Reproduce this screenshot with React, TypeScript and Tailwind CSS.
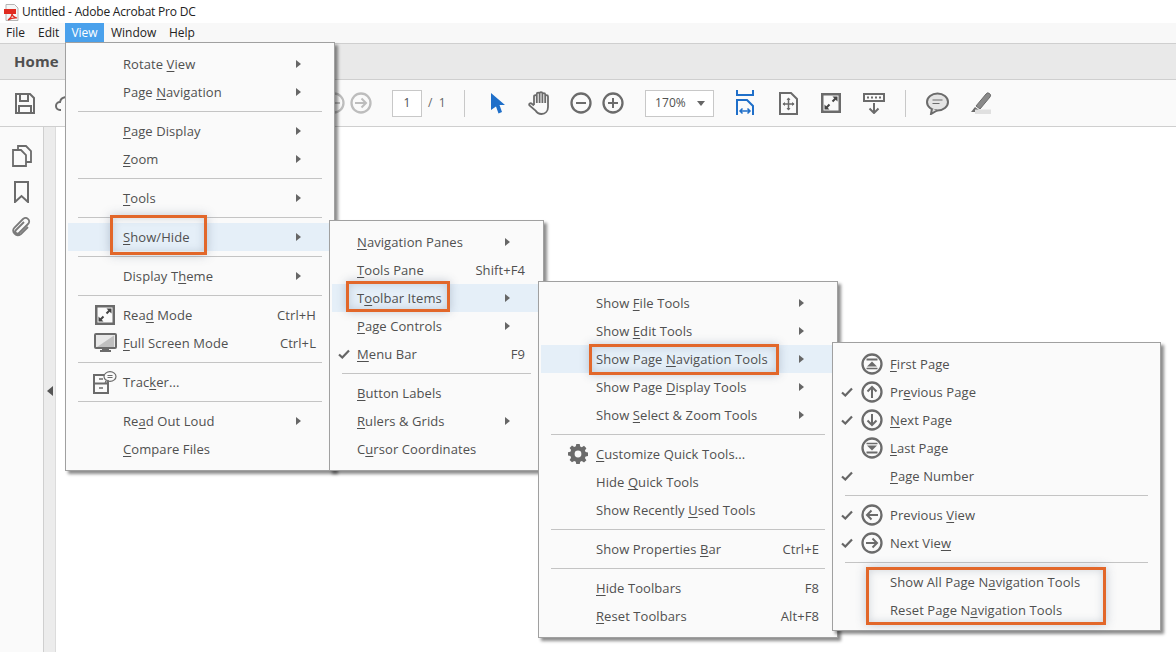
import type { ReactNode } from "react";

type Fila =
  | { sep: true }
  | {
      sep?: false;
      texto: string; // & marca la letra subrayada
      flecha?: boolean;
      atajo?: string;
      check?: boolean;
      icono?: ReactNode;
      activa?: boolean;
    };

const gris = "#6b6b6b";

function Svg({ w, h, children }: { w: number; h: number; children: ReactNode }) {
  return (
    <svg width={w} height={h} viewBox={`0 0 ${w} ${h}`} fill="none" className="block flex-none">
      {children}
    </svg>
  );
}

function Circulo({ children, color = gris, r = 9.5, size = 22 }: { children: ReactNode; color?: string; r?: number; size?: number }) {
  const c = size / 2;
  return (
    <Svg w={size} h={size}>
      <circle cx={c} cy={c} r={r} stroke={color} strokeWidth="2.300" />
      <g stroke={color} strokeWidth="2" fill="none" transform={`translate(${c - 11} ${c - 11})`}>
        {children}
      </g>
    </Svg>
  );
}

const FlechaArriba = () => <Circulo><path d="M11 17V6M6.5 10.5 11 6l4.5 4.5" /></Circulo>;
const FlechaAbajo = () => <Circulo><path d="M11 5v11M6.5 11.5 11 16l4.5-4.5" /></Circulo>;
const FlechaIzq = ({ color }: { color?: string }) => <Circulo color={color}><path d="M17 11H6M10.5 6.5 6 11l4.5 4.5" /></Circulo>;
const FlechaDer = ({ color }: { color?: string }) => <Circulo color={color}><path d="M5 11h11M11.5 6.5 16 11l-4.5 4.5" /></Circulo>;
const Primera = () => (
  <Circulo>
    <path d="M5.500 6.500h11" />
    <path d="M11 8.500 16 13.500H6z" fill={gris} stroke="none" />
    <path d="M5.500 15.500h11" strokeWidth="1.500" />
  </Circulo>
);
const Ultima = () => (
  <Circulo>
    <path d="M5.500 6.500h11" strokeWidth="1.500" />
    <path d="M11 13.500 6 8.500h10z" fill={gris} stroke="none" />
    <path d="M5.500 15.500h11" />
  </Circulo>
);

const Engrane = () => (
  <Svg w={20} h={20}>
    <path
      d="M8.3 0h3.4l.5 2.6 1.6.7 2.2-1.5 2.4 2.4-1.5 2.2.7 1.6 2.4.5v3.4l-2.4.5-.7 1.6 1.5 2.2-2.4 2.4-2.2-1.5-1.6.7-.5 2.6H8.3l-.5-2.6-1.6-.7L4 18.3l-2.4-2.4 1.5-2.2-.7-1.6L0 11.6V8.2l2.4-.5.7-1.6L1.6 3.900 4 1.500l2.200 1.500 1.600-.7z"
      fill={gris}
    />
    <circle cx="10" cy="10" r="3.4" fill="#fafafa" />
  </Svg>
);

const LeerModo = ({ size = 20 }: { size?: number }) => (
  <Svg w={size} h={size}>
    <rect x="1.250" y="1.250" width={size - 2.500} height={size - 2.500} fill="none" stroke={gris} strokeWidth="2.500" />
    <path d="M11.500 8.500 15 5M8.500 11.500 5 15" stroke="#444" strokeWidth="2" />
    <path d="M11.500 3.500h5v5zM8.500 16.500h-5v-5z" fill="#444" />
  </Svg>
);

const Pantalla = () => (
  <Svg w={23} h={20}>
    <rect x="1" y="1" width="21" height="14" rx="1" fill="#e8e8e8" stroke={gris} strokeWidth="2" />
    <path d="M3 14 20 2.500V14z" fill="#c0c0c0" />
    <rect x="8" y="15" width="7" height="3" fill={gris} />
    <rect x="6" y="17" width="11" height="2" fill={gris} />
  </Svg>
);

const Rastreador = () => (
  <Svg w={24} h={24}>
    <path d="M1 5h14v18H1z" fill="#fafafa" stroke={gris} strokeWidth="2" />
    <path d="M1 13.500h14" stroke={gris} strokeWidth="2" />
    <path d="M6 9h4M6 18h4" stroke={gris} strokeWidth="1.500" />
    <ellipse cx="17" cy="6.500" rx="6" ry="4.800" fill="#fafafa" stroke={gris} strokeWidth="1.200" />
    <path d="M14.500 5.500h5M14.500 7.500h5" stroke={gris} />
    <path d="M13.500 10l-1.500 2.500 4-1.500z" fill="#fafafa" stroke={gris} strokeWidth="1" />
  </Svg>
);

const Check = () => (
  <svg width="12" height="10" viewBox="0 0 12 10" className="block">
    <path d="M1 5.500 4.300 8.500 11 1.500" stroke="#666" strokeWidth="2.200" fill="none" />
  </svg>
);

function Etiqueta({ texto }: { texto: string }) {
  const i = texto.indexOf("&");
  if (i < 0) return <span>{texto}</span>;
  return (
    <span>
      {texto.slice(0, i)}
      <span className="underline underline-offset-2">{texto[i + 1]}</span>
      {texto.slice(i + 2)}
    </span>
  );
}

function Menu({ clase, margen, filas }: { clase: string; margen: string; filas: Fila[] }) {
  return (
    <div className={`absolute flex flex-col border border-[#a0a0a0] bg-[#fafafa] py-[7px] shadow-[3px_3px_3px_rgba(0,0,0,0.45)] ${clase}`}>
      {filas.map((f, i) =>
        f.sep ? (
          <div key={i} className="flex h-[11px] flex-none items-center px-[12px]">
            <div className="h-px w-full bg-[#c4c4c4]" />
          </div>
        ) : (
          <div key={i} className={`relative mx-[2px] flex h-[28px] flex-none items-center ${f.activa ? "bg-[#e5eff8]" : ""}`}>
            {f.check && (
              <div className="absolute left-[6px] top-[9px]">
                <Check />
              </div>
            )}
            {f.icono && <div className="absolute left-[26px] top-1/2 flex w-[22px] -translate-y-1/2 justify-center">{f.icono}</div>}
            <div className={`${margen} flex-1 whitespace-nowrap pt-[2px]`}>
              <Etiqueta texto={f.texto} />
            </div>
            {f.atajo && <div className="mr-[16px] whitespace-nowrap pt-[2px]">{f.atajo}</div>}
            {f.flecha && <div className="mr-[31px] h-0 w-0 border-y-[4px] border-l-[5px] border-y-transparent border-l-[#666]" />}
          </div>
        ),
      )}
    </div>
  );
}

const vista: Fila[] = [
  { texto: "Rotate &View", flecha: true },
  { texto: "Page &Navigation", flecha: true },
  { sep: true },
  { texto: "&Page Display", flecha: true },
  { texto: "&Zoom", flecha: true },
  { sep: true },
  { texto: "&Tools", flecha: true },
  { sep: true },
  { texto: "&Show/Hide", flecha: true, activa: true },
  { sep: true },
  { texto: "Display T&heme", flecha: true },
  { sep: true },
  { texto: "Rea&d Mode", atajo: "Ctrl+H", icono: <LeerModo /> },
  { texto: "&Full Screen Mode", atajo: "Ctrl+L", icono: <Pantalla /> },
  { sep: true },
  { texto: "Trac&ker...", icono: <Rastreador /> },
  { sep: true },
  { texto: "Re&ad Out Loud", flecha: true },
  { texto: "&Compare Files" },
];

const mostrar: Fila[] = [
  { texto: "&Navigation Panes", flecha: true },
  { texto: "&Tools Pane", atajo: "Shift+F4" },
  { texto: "T&oolbar Items", flecha: true, activa: true },
  { texto: "&Page Controls", flecha: true },
  { texto: "&Menu Bar", atajo: "F9", check: true },
  { sep: true },
  { texto: "&Button Labels" },
  { texto: "&Rulers & Grids", flecha: true },
  { texto: "C&ursor Coordinates" },
];

const barra: Fila[] = [
  { texto: "Show &File Tools", flecha: true },
  { texto: "Show &Edit Tools", flecha: true },
  { texto: "Show Page &Navigation Tools", flecha: true, activa: true },
  { texto: "Show Page &Display Tools", flecha: true },
  { texto: "Show &Select & Zoom Tools", flecha: true },
  { sep: true },
  { texto: "&Customize Quick Tools...", icono: <Engrane /> },
  { texto: "Hide &Quick Tools" },
  { texto: "Show Recently &Used Tools" },
  { sep: true },
  { texto: "Show Properties &Bar", atajo: "Ctrl+E" },
  { sep: true },
  { texto: "&Hide Toolbars", atajo: "F8" },
  { texto: "&Reset Toolbars", atajo: "Alt+F8" },
];

const navegacion: Fila[] = [
  { texto: "&First Page", icono: <Primera /> },
  { texto: "Pr&evious Page", check: true, icono: <FlechaArriba /> },
  { texto: "&Next Page", check: true, icono: <FlechaAbajo /> },
  { texto: "&Last Page", icono: <Ultima /> },
  { texto: "&Page Number", check: true },
  { sep: true },
  { texto: "Previous &View", check: true, icono: <FlechaIzq /> },
  { texto: "Next Vie&w", check: true, icono: <FlechaDer /> },
  { sep: true },
  { texto: "Show All Page N&avigation Tools" },
  { texto: "Reset Page N&avigation Tools" },
];

function Marco({ clase }: { clase: string }) {
  return <div className={`absolute border-[3px] border-[#e2672a] shadow-[0_0_10px_rgba(60,80,110,0.28),inset_0_0_8px_rgba(60,80,110,0.22)] ${clase}`} />;
}

export default function App() {
  return (
    <div className="relative flex h-[652px] w-[1176px] flex-col overflow-hidden bg-white text-[13px] tracking-[0.08px] text-[#505050] [font-family:'Open_Sans',sans-serif]">
      {/* titulo */}
      <div className="flex h-[23px] flex-none items-center bg-white pl-[3px] pt-[1px] text-[12px] tracking-[-0.2px] text-[#222]">
        <svg width="16" height="17" viewBox="0 0 16 17" className="mr-[3px] block flex-none">
          <path d="M3 .5h8.500L15 4v12.500H3z" fill="#f6f6f6" stroke="#b5b5b5" />
          <rect x="1" y="5" width="12" height="5" fill="#e02b20" />
          <path d="M5 16c2-1 3.500-3 4-6 .5 2 2 3.500 5 4-3-.2-6 .3-9 2z" fill="none" stroke="#e02b20" strokeWidth="1.200" />
        </svg>
        Untitled - Adobe Acrobat Pro DC
      </div>
      {/* menu */}
      <div className="flex h-[20px] flex-none items-center bg-[#f8f8f8] pl-[6px] text-[12px] tracking-normal text-[#222]">
        <span className="w-[32px]">File</span>
        <span className="w-[27px]">Edit</span>
        <span className="flex h-[20px] w-[39px] items-center justify-center bg-[#4aa1ec] text-white">View</span>
        <span className="ml-[7px] w-[58px]">Window</span>
        <span>Help</span>
      </div>
      {/* pestañas */}
      <div className="flex h-[37px] flex-none items-center border-y border-[#cfcfcf] bg-[#e9e9e9] pl-[14px] text-[15px] font-bold text-[#505050]">Home</div>
      {/* herramientas */}
      <div className="flex h-[47px] flex-none items-center border-b border-[#cfcfcf] bg-[#fafafa]">
        <div className="ml-[14px] w-[36px]">
          <Svg w={21} h={21}>
            <path d="M2 1h14l4 4v15H2z" stroke={gris} strokeWidth="2" />
            <path d="M6 2v6h8V2M5 20v-7h12v7" stroke={gris} strokeWidth="2" />
          </Svg>
        </div>
        <div className="ml-[5px] w-[24px]">
          <Svg w={24} h={20}>
            <path d="M6 17H5a4 4 0 0 1 0-8 6 6 0 0 1 11-2 5 5 0 0 1 3 10h-3" stroke={gris} strokeWidth="2" />
          </Svg>
        </div>
        <div className="ml-[244px] w-[27px]"><FlechaIzq color="#bdbdbd" /></div>
        <div className="w-[42px]"><FlechaDer color="#bdbdbd" /></div>
        <div className="flex h-[27px] w-[30px] items-center justify-center border border-[#c8c8c8] bg-white text-[12px]">1</div>
        <div className="ml-[6px] w-[36px] text-[12px] text-[#666]">/ &nbsp;1</div>
        <div className="h-[27px] w-px bg-[#c8c8c8]" />
        <div className="ml-[25px] w-[38px]">
          <Svg w={16} h={22}>
            <path d="M1 1 15 13H9.500l2.500 7-3.500 1.500L6 14.500 1 18z" fill="#1f6fc9" />
          </Svg>
        </div>
        <div className="w-[42px]">
          <Svg w={24} h={25}>
            <path
              d="M6 14V5.500a1.400 1.400 0 0 1 2.800 0V3a1.400 1.400 0 0 1 2.800 0v-.5a1.400 1.400 0 0 1 2.800 0V3.500a1.400 1.400 0 0 1 2.800 0V5.500a1.400 1.400 0 0 1 2.800 0V16c0 4-2.500 7-6.500 7-3 0-4.500-1-6-3.500L1.500 14.500c-1-1.500 1-3 2.300-1.800L6 14.500M8.800 5v7M11.600 3v9M14.400 3v9M17.200 5v7"
              stroke={gris}
              strokeWidth="1.800"
            />
          </Svg>
        </div>
        <div className="w-[32px]">
          <Circulo><path d="M6 11h10" /></Circulo>
        </div>
        <div className="w-[43px]">
          <Circulo><path d="M6 11h10M11 6v10" /></Circulo>
        </div>
        <div className="flex h-[27px] w-[69px] items-center justify-between border border-[#c8c8c8] bg-white pr-[8px] pl-[9px] text-[12px]">
          170%
          <span className="h-0 w-0 border-x-[4px] border-t-[5px] border-x-transparent border-t-[#666]" />
        </div>
        <div className="ml-[22px] w-[43px]">
          <Svg w={18} h={26}>
            <path d="M1 0v5h16V0" stroke="#1f6fc9" strokeWidth="2" />
            <path d="M1 25V10h10l6 6v9" stroke="#1f6fc9" strokeWidth="2" />
            <path d="M4 21h10M6.500 18.500 4 21l2.500 2.500M11.500 18.500 14 21l-2.500 2.500" stroke="#1f6fc9" strokeWidth="1.500" />
          </Svg>
        </div>
        <div className="w-[42px]">
          <Svg w={19} h={23}>
            <path d="M1 1h11l6 6v15H1z" stroke={gris} strokeWidth="2" />
            <path d="M9.500 6v12M4 12h11" stroke={gris} strokeWidth="1.500" />
            <path d="M7.500 8 9.500 5.500 11.500 8zM7.500 16l2 2.500 2-2.500zM6 10l-2.500 2L6 14zM13 10l2.500 2-2.500 2z" fill={gris} />
          </Svg>
        </div>
        <div className="w-[42px]"><LeerModo /></div>
        <div className="w-[42px]">
          <Svg w={22} h={22}>
            <path d="M1 2h20v7H1z" stroke={gris} strokeWidth="2" />
            <path d="M4 5.500h2M8 5.500h2M12 5.500h2M16 5.500h2" stroke={gris} strokeWidth="2" />
            <path d="M11 11v10M6.500 16.500 11 21l4.500-4.500" stroke={gris} strokeWidth="2" />
          </Svg>
        </div>
        <div className="h-[27px] w-px bg-[#c8c8c8]" />
        <div className="ml-[20px] w-[43px]">
          <Svg w={23} h={23}>
            <ellipse cx="11.500" cy="10" rx="10.500" ry="8.500" fill="#e4e4e4" stroke={gris} strokeWidth="2" />
            <path d="M6.500 8h10M6.500 11.500h7" stroke={gris} />
            <path d="M6 16.500 5 22l6-3.500" fill="#e4e4e4" stroke={gris} strokeWidth="2" />
          </Svg>
        </div>
        <div>
          <Svg w={23} h={23}>
            <path d="M7 14 17 2a2.500 2.500 0 0 1 4 3L11 17z" fill="#8a8a8a" stroke={gris} />
            <path d="M6 15l4 3-2 2H2z" fill={gris} />
            <rect x="6" y="17.500" width="16" height="4.500" fill="#e0e0e0" />
          </Svg>
        </div>
      </div>
      {/* cuerpo */}
      <div className="flex min-h-0 flex-1">
        <div className="flex w-[44px] flex-none flex-col items-center gap-[14px] border-r border-[#cfcfcf] bg-[#fafafa] pt-[18px]">
          <Svg w={20} h={22}>
            <path d="M6 4V1h8l5 5v11h-5" stroke={gris} strokeWidth="1.800" />
            <path d="M1 5h8l5 5v11H1z" stroke={gris} strokeWidth="1.800" />
          </Svg>
          <Svg w={15} h={22}>
            <path d="M1 1h13v20l-6.500-6L1 21z" stroke={gris} strokeWidth="2" />
          </Svg>
          <Svg w={20} h={21}>
            <path
              d="M12 5 4 13c-2 2 1 5 3 3l9-9c3.500-3.500-1.500-8-5-5L2.500 10.500C-1 14.500 4 21 9 17l7-7"
              stroke="#7a7a7a"
              strokeWidth="1.800"
            />
          </Svg>
        </div>
        <div className="flex w-[12px] flex-none items-center border-r border-[#dcdcdc] bg-[#ececec] pt-[2px] pl-[3px]">
          <span className="h-0 w-0 border-y-[5px] border-r-[6px] border-y-transparent border-r-[#555]" />
        </div>
        <div className="flex-1 bg-white" />
      </div>

      <Menu clase="left-[65px] top-[42px] h-[429px] w-[270px]" margen="ml-[55px]" filas={vista} />
      <Menu clase="left-[329px] top-[220px] h-[251px] w-[215px]" margen="ml-[25px]" filas={mostrar} />
      <Menu clase="left-[538px] top-[281px] h-[357px] w-[300px]" margen="ml-[55px]" filas={barra} />
      <Menu clase="left-[832px] top-[342px] h-[289px] w-[329px]" margen="ml-[55px]" filas={navegacion} />

      <Marco clase="left-[110px] top-[215px] h-[40px] w-[97px]" />
      <Marco clase="left-[346px] top-[281px] h-[31px] w-[104px]" />
      <Marco clase="left-[589px] top-[344px] h-[31px] w-[190px]" />
      <Marco clase="left-[866px] top-[567px] h-[58px] w-[240px]" />
    </div>
  );
}
